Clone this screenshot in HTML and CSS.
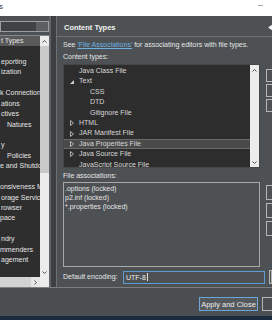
FILE: index.html
```html
<!DOCTYPE html>
<html lang="en">
<head>
  <title>Preferences</title>
  <meta name="viewport" content="width=device-width, initial-scale=1">
  <link rel="stylesheet" href="styles.css">
</head>
<body>
  <div class="titlebar">
    <span class="title">s</span>
    <span class="min"></span>
  </div>

  <div class="dialog">
    <div class="main">

      <!-- preference tree -->
      <div class="nav">
        <div class="filter"><span class="filter-clear"></span></div>
        <div class="tree">
          <div class="tree-body">
            <ul class="tree-rows">
              <li class="sel">t Types</li>
              <li></li>
              <li>eporting</li>
              <li>ization</li>
              <li></li>
              <li class="cut">k Connection</li>
              <li>ations</li>
              <li>ctives</li>
              <li class="in">Natures</li>
              <li></li>
              <li>y</li>
              <li class="in">Policies</li>
              <li class="cut">e and Shutdo</li>
              <li></li>
              <li class="cut">onsiveness M</li>
              <li>orage Service</li>
              <li>rowser</li>
              <li class="cut">pace</li>
              <li></li>
              <li>ndry</li>
              <li class="cut">mmenders</li>
              <li>agement</li>
              <li></li>
            </ul>
            <div class="vscroll">
              <span class="arrow"><svg width="5" height="3" viewBox="0 0 5 3"><polyline points="0.5,2.5 2.5,0.5 4.5,2.5" fill="none" stroke="#555" stroke-width="1"/></svg></span>
              <span class="thumb tall"></span>
              <span class="track"></span>
              <span class="arrow"><svg width="5" height="3" viewBox="0 0 5 3"><polyline points="0.5,0.5 2.5,2.5 4.5,0.5" fill="none" stroke="#555" stroke-width="1"/></svg></span>
            </div>
          </div>
          <div class="hscroll">
            <span class="hthumb"></span>
            <span class="harrow"><svg width="3" height="5" viewBox="0 0 3 5"><polyline points="0.5,0.5 2.5,2.5 0.5,4.5" fill="none" stroke="#555" stroke-width="1"/></svg></span>
            <span class="corner"></span>
          </div>
        </div>
      </div>

      <div class="sash"></div>

      <!-- content types page -->
      <div class="page">
        <div class="page-head">
          <h1>Content Types</h1>
          <svg class="nav-back" width="6" height="7" viewBox="0 0 6 7"><polygon points="0,3.5 5,0 5,7" fill="#f0f0f0"/></svg>
        </div>

        <div class="page-body">
          <p class="intro">See <a href="#">'File Associations'</a> for associating editors with file types.</p>
          <p class="label">Content types:</p>
          <div class="list-row">
            <div class="types">
              <ul class="types-rows">
                <li class="lv1"><span class="tw"></span>Java Class File</li>
                <li class="lv0"><span class="tw"><svg width="4" height="4" viewBox="0 0 4 4"><polygon points="4,0 4,4 0,4" fill="#d0d0d0"/></svg></span>Text</li>
                <li class="lv2"><span class="tw"></span>CSS</li>
                <li class="lv2"><span class="tw"></span>DTD</li>
                <li class="lv2"><span class="tw"></span>Gitignore File</li>
                <li class="lv1"><span class="tw"><svg width="4" height="6" viewBox="0 0 4 6"><polygon points="0.5,0.5 3.5,3 0.5,5.5" fill="none" stroke="#bdbdbd" stroke-width="0.9"/></svg></span>HTML</li>
                <li class="lv1"><span class="tw"><svg width="4" height="6" viewBox="0 0 4 6"><polygon points="0.5,0.5 3.5,3 0.5,5.5" fill="none" stroke="#bdbdbd" stroke-width="0.9"/></svg></span>JAR Manifest File</li>
                <li class="lv1 sel"><span class="tw"><svg width="4" height="6" viewBox="0 0 4 6"><polygon points="0.5,0.5 3.5,3 0.5,5.5" fill="none" stroke="#bdbdbd" stroke-width="0.9"/></svg></span>Java Properties File</li>
                <li class="lv1"><span class="tw"><svg width="4" height="6" viewBox="0 0 4 6"><polygon points="0.5,0.5 3.5,3 0.5,5.5" fill="none" stroke="#bdbdbd" stroke-width="0.9"/></svg></span>Java Source File</li>
                <li class="lv1"><span class="tw"></span>JavaScript Source File</li>
              </ul>
              <div class="vscroll">
                <span class="arrow"><svg width="5" height="3" viewBox="0 0 5 3"><polyline points="0.5,2.5 2.5,0.5 4.5,2.5" fill="none" stroke="#555" stroke-width="1"/></svg></span>
                <span class="track"></span>
                <span class="arrow"><svg width="5" height="3" viewBox="0 0 5 3"><polyline points="0.5,0.5 2.5,2.5 4.5,0.5" fill="none" stroke="#555" stroke-width="1"/></svg></span>
              </div>
            </div>
            <div class="side side-types">
              <span class="btn"></span>
              <span class="btn"></span>
              <span class="btn"></span>
            </div>
          </div>

          <p class="label label-assoc">File associations:</p>
          <div class="list-row assoc-row">
            <ul class="assoc">
              <li>.options (locked)</li>
              <li>p2.inf (locked)</li>
              <li>*.properties (locked)</li>
            </ul>
            <div class="side side-assoc">
              <span class="btn"></span>
              <span class="btn"></span>
              <span class="btn"></span>
            </div>
          </div>

          <div class="encoding">
            <span class="enc-label">Default encoding:</span>
            <span class="input">UTF-8<span class="caret"></span></span>
            <span class="btn enc-btn"></span>
          </div>
        </div>
      </div>
    </div>

    <div class="button-bar">
      <button class="primary">Apply and Close</button>
      <button class="cutoff"></button>
    </div>
  </div>

  <div class="taskbar"></div>
</body>
</html>
```

FILE: styles.css
```css
html {
  font-family: "Liberation Sans", Arial, sans-serif;
  font-size: 7px;
}
body {
  margin: 0;
  width: 272px;
  height: 320px;
  overflow: hidden;
  background-color: #4d5154;
  color: #e6e6e6;
}
ul {
  margin: 0;
  padding: 0;
  list-style: none;
}
p {
  margin: 0;
}

/* window title */
.titlebar {
  height: 16px;
  background-color: #fff;
  display: flex;
  justify-content: space-between;
  align-items: flex-start;
}
.titlebar .title {
  color: #333;
  font-size: 8px;
  line-height: 14px;
  margin-left: -1px;
}
.titlebar .min {
  width: 5px;
  height: 1px;
  margin: 5px 9px 0 0;
  background-color: #a8a8a8;
}

.dialog {
  height: 300px;
  display: flex;
  flex-direction: column;
}
.main {
  height: 271px;
  display: flex;
  border-bottom: 1px solid #7b7f82;
}

/* left tree */
.nav {
  width: 49px;
  flex: none;
  padding-top: 5px;
  display: flex;
  flex-direction: column;
}
.filter {
  height: 11px;
  box-sizing: border-box;
  border: 1px solid #9c9fa1;
  background-color: #404346;
  margin-bottom: 3px;
  display: flex;
  justify-content: flex-end;
}
.filter-clear {
  width: 12px;
  background-color: #5d6063;
}
.tree {
  flex: 1;
  display: flex;
  flex-direction: column;
  border-top: 1px solid #85888b;
  background-color: #2e2e2e;
  min-height: 0;
}
.tree-body {
  flex: 1;
  display: flex;
  min-height: 0;
}
.tree-rows {
  flex: 1;
  overflow: hidden;
  white-space: nowrap;
}
.tree-rows li {
  height: 10.45px;
  line-height: 10.45px;
  padding-left: 1px;
  color: #e4e4e4;
}
.tree-rows li.cut {
  padding-left: 0;
}
.tree-rows li.in {
  padding-left: 7px;
}
.tree-rows li.sel {
  background-color: #5a5a5a;
}

.vscroll {
  width: 9px;
  flex: none;
  display: flex;
  flex-direction: column;
  background-color: #ececec;
}
.vscroll .arrow {
  height: 10px;
  display: flex;
  align-items: center;
  justify-content: center;
  flex: none;
}
.vscroll .thumb.tall {
  height: 127px;
  background-color: #c9c9c9;
}
.vscroll .track {
  flex: 1;
}

.hscroll {
  height: 10px;
  flex: none;
  display: flex;
  background-color: #e6e6e6;
}
.hthumb {
  width: 31px;
  background-color: #d2d2d2;
}
.harrow {
  width: 9px;
  display: flex;
  align-items: center;
  justify-content: center;
}
.corner {
  width: 9px;
  background-color: #ececec;
}

.sash {
  width: 8px;
  flex: none;
  box-sizing: border-box;
  border-left: 2px solid #606467;
  border-right: 1px solid #6d7174;
  background-color: #3d4043;
}

/* right page */
.page {
  flex: 1;
  min-width: 0;
  display: flex;
  flex-direction: column;
}
.page-head {
  height: 21px;
  box-sizing: border-box;
  padding: 3px 0 0 7px;
  border-bottom: 1px solid #6d7174;
  display: flex;
  align-items: center;
  justify-content: space-between;
}
.page-head h1 {
  margin: 0;
  font-size: 7.5px;
  font-weight: bold;
  color: #f2f2f2;
}
.nav-back {
  margin-right: -2px;
}
.page-body {
  padding-left: 6px;
  display: flex;
  flex-direction: column;
  white-space: nowrap;
}
.intro {
  margin-top: 3px;
  line-height: 10px;
}
.intro a {
  color: #6db2e3;
}
.label {
  margin-top: 2px;
  line-height: 10px;
}
.label-assoc {
  margin-top: 3px;
}
.list-row {
  display: flex;
  gap: 6px;
  margin-top: 2px;
}
.assoc-row {
  margin-top: 1px;
}

.types {
  width: 197px;
  height: 104px;
  flex: none;
  box-sizing: border-box;
  border: 1px solid #474747;
  background-color: #2d2d2d;
  display: flex;
}
.types-rows {
  flex: 1;
  overflow: hidden;
  padding-top: 1px;
}
.types-rows li {
  height: 10.4px;
  line-height: 10.4px;
  box-sizing: border-box;
  display: flex;
  align-items: center;
  color: #d8d8d8;
}
.types-rows .lv0,
.types-rows .lv1 {
  padding-left: 4px;
}
.types-rows .lv2 {
  padding-left: 15px;
}
.types-rows .tw {
  width: 11px;
  flex: none;
  display: flex;
  align-items: center;
  padding-left: 2px;
  box-sizing: border-box;
}
.types-rows li.sel {
  background-color: #4a4a4a;
  border-top: 1px solid #6a6a6a;
  border-bottom: 1px solid #6a6a6a;
}

.side {
  flex: 1;
  display: flex;
  flex-direction: column;
}
.btn {
  display: block;
  width: 60px;
  box-sizing: border-box;
  border: 1px solid #b3b6b8;
}
.side-types {
  padding-top: 5px;
  gap: 2px;
}
.side-types .btn {
  height: 13px;
}
.side-assoc {
  padding-top: 3px;
  gap: 3px;
}
.side-assoc .btn {
  height: 15px;
}

.assoc {
  width: 197px;
  height: 85px;
  flex: none;
  box-sizing: border-box;
  border: 1px solid #a6a9ab;
  padding: 1px 0 0 1px;
}
.assoc li {
  height: 9px;
  line-height: 9px;
  color: #e4e4e4;
}

.encoding {
  margin-top: 3px;
  height: 14px;
  display: flex;
  align-items: flex-start;
}
.enc-label {
  width: 60px;
  flex: none;
  line-height: 14px;
}
.input {
  width: 142px;
  height: 13px;
  margin-top: 1px;
  flex: none;
  box-sizing: border-box;
  border: 1px solid #5e9ad3;
  padding-left: 2px;
  line-height: 11px;
  color: #ececec;
}
.caret {
  display: inline-block;
  width: 1px;
  height: 8px;
  margin-left: 1px;
  vertical-align: -1px;
  background-color: #e0e0e0;
}
.enc-btn {
  height: 14px;
  margin-left: 4px;
}

/* bottom buttons */
.button-bar {
  height: 28px;
  box-sizing: border-box;
  padding-top: 9px;
  display: flex;
  justify-content: flex-end;
  align-items: flex-start;
  gap: 4px;
  background-color: #4a4e51;
}
.button-bar button {
  height: 14px;
  padding: 0;
  font-family: inherit;
  font-size: 7.5px;
  color: #ececec;
  background-color: #55595c;
  box-sizing: border-box;
}
.button-bar .primary {
  width: 59px;
  border: 1px solid #6ea4d9;
}
.button-bar .cutoff {
  width: 60px;
  margin-right: -50px;
  border: 1px solid #b3b6b8;
  background-color: transparent;
}

.taskbar {
  height: 4px;
  background-color: #1c2b3d;
}
```
